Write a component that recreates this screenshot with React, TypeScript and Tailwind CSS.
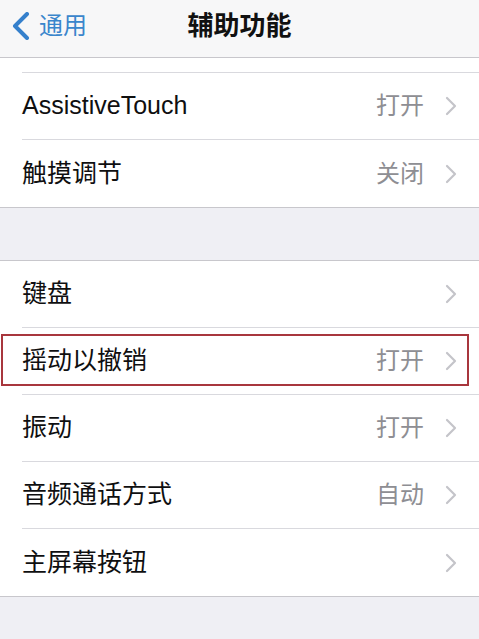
import React from 'react'

const FONT = { fontFamily: '"Helvetica Neue", "Liberation Sans", "Noto Sans CJK SC", sans-serif' }

type Row = { label: string; value?: string; highlight?: boolean }

const GROUP_ONE: Row[] = [
  { label: 'AssistiveTouch', value: '打开' },
  { label: '触摸调节', value: '关闭' },
]

const GROUP_TWO: Row[] = [
  { label: '键盘' },
  { label: '摇动以撤销', value: '打开', highlight: true },
  { label: '振动', value: '打开' },
  { label: '音频通话方式', value: '自动' },
  { label: '主屏幕按钮' },
]

function Chevron() {
  return (
    <svg width="12" height="20" viewBox="0 0 12 20" fill="none" className="shrink-0">
      <path d="M2 2l8 8-8 8" stroke="#c4c4c9" strokeWidth="2.2" strokeLinecap="round" strokeLinejoin="round" />
    </svg>
  )
}

function SettingsRow({ row, last }: { row: Row; last: boolean }) {
  return (
    <div className="relative h-[67px] pl-[22px]">
      <div
        className={`flex h-full items-center justify-between pr-[22px] ${last ? '' : 'border-b border-[#d9d9de]'}`}
      >
        <span className="text-[25px] text-[#0f0f10]">{row.label}</span>
        <div className="flex items-center gap-[21px]">
          {row.value && <span className="text-[24px] text-[#8e8e93]">{row.value}</span>}
          <Chevron />
        </div>
      </div>
      {row.highlight && (
        <div className="absolute left-[1px] top-[6px] h-[52px] w-[468px] border-2 border-[#a8363d]" />
      )}
    </div>
  )
}

export default function App() {
  return (
    <div className="min-h-[639px] w-[479px] bg-[#efeff4]" style={FONT}>
      {/* nav bar */}
      <div className="grid h-[58px] grid-cols-[1fr_auto_1fr] items-center border-b border-[#c8c7cc] bg-[#f7f7f8] pb-[5px]">
        <div className="flex items-center gap-[9px] pl-[12px]">
          <svg width="18" height="28" viewBox="0 0 18 28" fill="none">
            <path d="M15 2L3 14l12 12" stroke="#3580cc" strokeWidth="4" strokeLinecap="round" strokeLinejoin="round" />
          </svg>
          <span className="text-[24px] text-[#3a86cc]">通用</span>
        </div>
        <div className="text-[26px] font-semibold text-[#111]">辅助功能</div>
        <div />
      </div>

      {/* first group, scrolled so the row above is cut */}
      <div className="border-b border-[#c8c7cc] bg-white">
        <div className="ml-[22px] h-[15px] border-b border-[#d9d9de]" />
        {GROUP_ONE.map((row, i) => (
          <SettingsRow key={row.label} row={row} last={i === GROUP_ONE.length - 1} />
        ))}
      </div>

      <div className="h-[52px]" />

      <div className="border-y border-[#c8c7cc] bg-white">
        {GROUP_TWO.map((row, i) => (
          <SettingsRow key={row.label} row={row} last={i === GROUP_TWO.length - 1} />
        ))}
      </div>
    </div>
  )
}
